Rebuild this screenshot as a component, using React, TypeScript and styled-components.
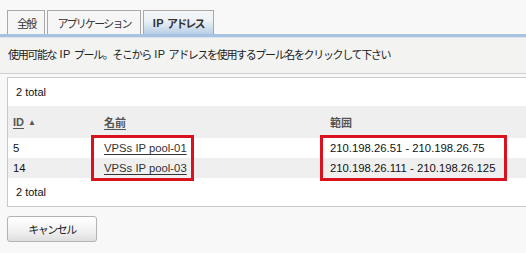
import React from "react";
import styled, { createGlobalStyle } from "styled-components";

const Global = createGlobalStyle`
  html, body { margin: 0; padding: 0; background: #f8f8f8; }
  body {
    font-family: "Liberation Sans", "Noto Sans CJK JP", sans-serif;
    font-size: 11px;
    color: #222;
  }
`;

const Page = styled.div`
  width: 526px;
  height: 253px;
  overflow: hidden;
  background: #f8f8f8;
  display: flex;
  flex-direction: column;
`;

const TabBar = styled.div`
  display: flex;
  align-items: flex-end;
  gap: 2px;
  padding: 10px 0 0 7px;
  height: 24px;
`;

const Tab = styled.div<{ $active?: boolean }>`
  height: 23px;
  padding: 0 9px;
  display: flex;
  align-items: center;
  border: 1px solid #a9a9a9;
  border-bottom: none;
  background: ${(p) =>
    p.$active ? "linear-gradient(#f4f6f8, #eef2f7 40%, #b9cfe6)" : "#f6f6f6"};
  font-weight: ${(p) => (p.$active ? "bold" : "normal")};
  color: #333;
  letter-spacing: -1.8px;
  white-space: pre;
`;

const Latin = styled.span`
  letter-spacing: 0.3px;
`;

const BlueBar = styled.div`
  height: 3px;
  background: #a8c3e2;
  border-bottom: 1px solid #d8e3f0;
`;

const Message = styled.div`
  height: 36px;
  box-sizing: border-box;
  padding: 0 0 3px 8px;
  display: flex;
  align-items: center;
  background: #f3f3f1;
  border-bottom: 1px solid #cfcfcf;
  color: #222;
  letter-spacing: -1.35px;
  white-space: pre;
`;

const Panel = styled.div`
  position: relative;
  margin: 3px 0 0 7px;
  background: #fff;
  border: 1px solid #c9c9c9;
  border-right: none;
`;

const TotalRow = styled.div`
  height: 28px;
  display: flex;
  align-items: center;
  padding-left: 8px;
  color: #111;
`;

const Grid = styled.div<{ $head?: boolean; $alt?: boolean }>`
  display: grid;
  grid-template-columns: 91px 226px 1fr;
  align-items: center;
  height: ${(p) => (p.$head ? "32px" : "20px")};
  padding-left: 5px;
  background: ${(p) => (p.$head || p.$alt ? "#efefef" : "#fff")};
`;

const HeadCell = styled.div`
  font-weight: bold;
  color: #555;
  display: flex;
  align-items: center;
  gap: 4px;
`;

const HeadLabel = styled.span`
  text-decoration: underline;
  text-underline-offset: 2px;
`;

const Arrow = styled.span`
  font-size: 8px;
  color: #555;
`;

const Cell = styled.div`
  color: #111;
  font-size: 11.3px;
`;

const Link = styled.a`
  color: #333;
  text-decoration: underline;
  text-underline-offset: 2px;
`;

const Highlight = styled.div<{ $left: number; $width: number }>`
  position: absolute;
  top: 57px;
  left: ${(p) => p.$left}px;
  width: ${(p) => p.$width}px;
  height: 46px;
  box-sizing: border-box;
  border: 3px solid #d9121e;
  pointer-events: none;
`;

const Footer = styled.div`
  padding: 9px 0 0 7px;
`;

const Button = styled.button`
  width: 90px;
  height: 26px;
  border: 1px solid #b3b3b3;
  border-radius: 3px;
  background: linear-gradient(#ffffff, #f4f4f4 50%, #dedede);
  font-family: inherit;
  font-size: 11px;
  color: #222;
  letter-spacing: -1.5px;
`;

const rows = [
  { id: "5", name: "VPSs IP pool-01", range: "210.198.26.51 - 210.198.26.75" },
  { id: "14", name: "VPSs IP pool-03", range: "210.198.26.111 - 210.198.26.125" },
];

export default function App() {
  return (
    <Page>
      <Global />
      <TabBar>
        <Tab>全般</Tab>
        <Tab>アプリケーション</Tab>
        <Tab $active>
          <Latin>IP </Latin>アドレス
        </Tab>
      </TabBar>
      <BlueBar />
      <Message>
        使用可能な<Latin> IP </Latin>プール。そこから<Latin> IP </Latin>
        アドレスを使用するプール名をクリックして下さい
      </Message>
      <Panel>
        <TotalRow>2 total</TotalRow>
        <Grid $head>
          <HeadCell>
            <HeadLabel>ID</HeadLabel>
            <Arrow>▲</Arrow>
          </HeadCell>
          <HeadCell>
            <HeadLabel>名前</HeadLabel>
          </HeadCell>
          <HeadCell>範囲</HeadCell>
        </Grid>
        {rows.map((r, i) => (
          <Grid key={r.id} $alt={i % 2 === 1}>
            <Cell>{r.id}</Cell>
            <Cell>
              <Link>{r.name}</Link>
            </Cell>
            <Cell>{r.range}</Cell>
          </Grid>
        ))}
        <TotalRow>2 total</TotalRow>
        <Highlight $left={83} $width={103} />
        <Highlight $left={312} $width={187} />
      </Panel>
      <Footer>
        <Button>キャンセル</Button>
      </Footer>
    </Page>
  );
}
